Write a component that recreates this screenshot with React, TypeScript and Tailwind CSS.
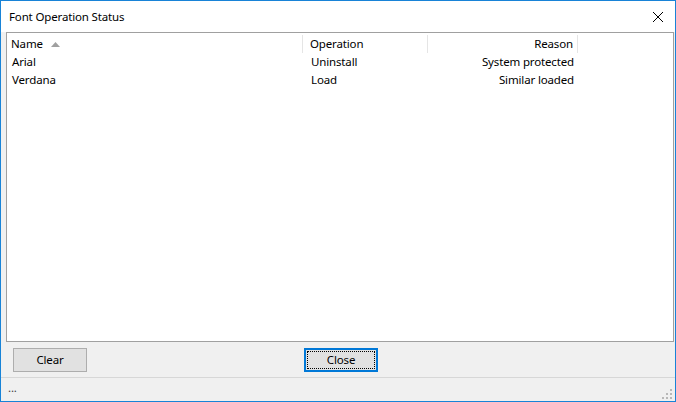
import React from 'react';

const rows = [
  { name: 'Arial', operation: 'Uninstall', reason: 'System protected' },
  { name: 'Verdana', operation: 'Load', reason: 'Similar loaded' },
];

export default function App() {
  return (
    <div
      className="w-[676px] h-[402px] border border-[#1883d7] bg-[#f0f0f0] flex flex-col text-[11.5px] tracking-[-0.15px] text-black"
      style={{ fontFamily: '"Noto Sans", "Open Sans", sans-serif' }}
    >
      {/* Title bar */}
      <div className="h-[31px] bg-white flex items-center justify-between pl-[8px] pr-[10px] shrink-0">
        <span>Font Operation Status</span>
        <svg width="12" height="12" viewBox="0 0 12 12" className="mr-[1px]">
          <path d="M1 1 L11 11 M11 1 L1 11" stroke="#000" strokeWidth="1" />
        </svg>
      </div>

      {/* List view */}
      <div className="ml-[5px] mr-[1px] flex-1 bg-white border border-[#a0a0a0] flex flex-col">
        <div className="h-[20px] pt-[2px] flex items-stretch">
          <div className="w-[296px] border-r border-[#e5e5e5] flex items-center pl-[4px] gap-[8px]">
            <span>Name</span>
            <svg width="9" height="5" viewBox="0 0 9 5">
              <path d="M0 5 L4.5 0 L9 5 Z" fill="#a0a0a0" />
            </svg>
          </div>
          <div className="w-[125px] border-r border-[#e5e5e5] flex items-center pl-[7px]">Operation</div>
          <div className="w-[150px] border-r border-[#e5e5e5] flex items-center justify-end pr-[4px]">Reason</div>
        </div>
        {rows.map((r) => (
          <div key={r.name} className="h-[18px] flex items-center">
            <div className="w-[296px] pl-[5px]">{r.name}</div>
            <div className="w-[125px] pl-[8px]">{r.operation}</div>
            <div className="w-[150px] text-right pr-[4px]">{r.reason}</div>
          </div>
        ))}
      </div>

      {/* Buttons */}
      <div className="h-[35px] shrink-0 flex items-start pt-[6px] pl-[12px]">
        <button className="w-[74px] h-[24px] bg-[#e1e1e1] border border-[#adadad] flex items-center justify-center">
          Clear
        </button>
        <button className="ml-[217px] w-[74px] h-[24px] bg-[#e1e1e1] border-2 border-[#0078d7] flex items-center justify-center p-[1px]">
          <span className="w-full h-full border border-dotted border-black flex items-center justify-center">
            Close
          </span>
        </button>
      </div>

      {/* Status bar */}
      <div className="h-[24px] shrink-0 border-t border-[#d7d7d7] flex items-center justify-between pl-[7px] pr-[2px]">
        <span className="text-[#404040] pb-[3px]">...</span>
        <svg width="11" height="11" viewBox="0 0 11 11" className="self-end mb-[1px]">
          <rect x="8" y="0" width="2" height="2" fill="#b8b8b8" />
          <rect x="4" y="4" width="2" height="2" fill="#b8b8b8" />
          <rect x="8" y="4" width="2" height="2" fill="#b8b8b8" />
          <rect x="0" y="8" width="2" height="2" fill="#b8b8b8" />
          <rect x="4" y="8" width="2" height="2" fill="#b8b8b8" />
          <rect x="8" y="8" width="2" height="2" fill="#b8b8b8" />
        </svg>
      </div>
    </div>
  );
}
